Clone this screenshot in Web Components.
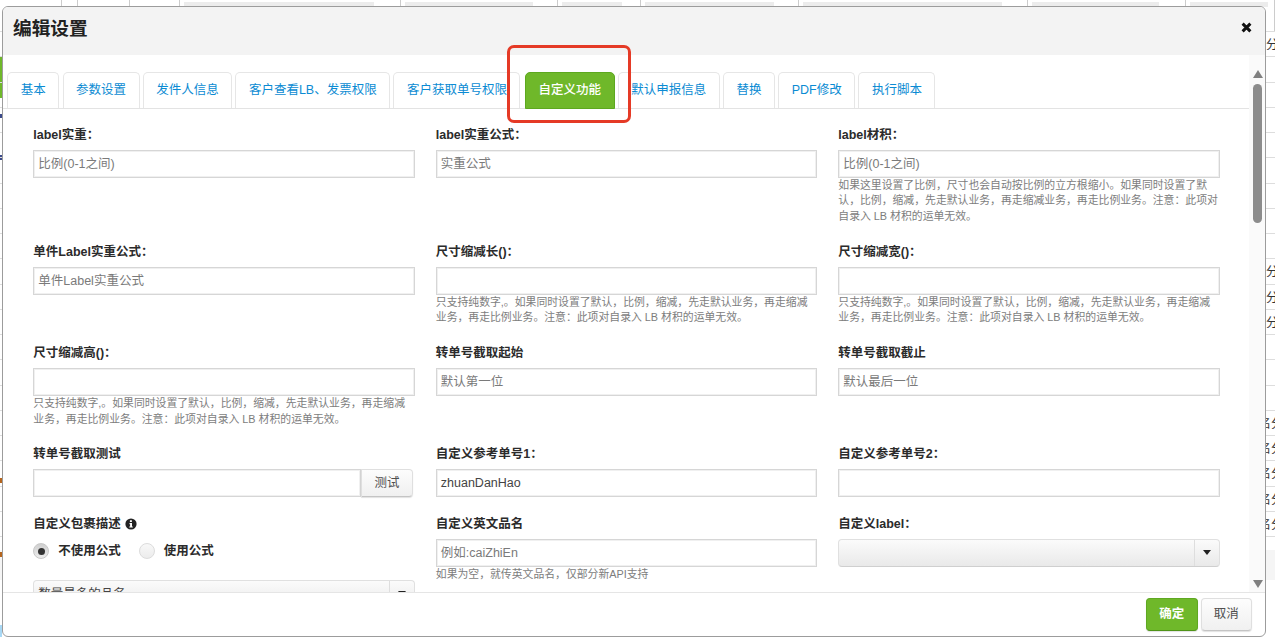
<!DOCTYPE html>
<html lang="zh">
<head>
<meta charset="utf-8">
<title>编辑设置</title>
<style>
  html, body { margin: 0; height: 100%; overflow: hidden; background: #fff; }
  body { font: 12.5px/16px "Liberation Sans", "Noto Sans CJK SC", sans-serif; color: #333; }
</style>
</head>
<body>
<page-backdrop></page-backdrop>

<settings-modal heading="编辑设置">
  <tab-bar slot="tabs">
    <tab-item>基本</tab-item>
    <tab-item>参数设置</tab-item>
    <tab-item>发件人信息</tab-item>
    <tab-item>客户查看LB、发票权限</tab-item>
    <tab-item>客户获取单号权限</tab-item>
    <tab-item active>自定义功能</tab-item>
    <tab-item>默认申报信息</tab-item>
    <tab-item>替换</tab-item>
    <tab-item>PDF修改</tab-item>
    <tab-item>执行脚本</tab-item>
  </tab-bar>

  <form-grid>
    <form-field label="label实重：">
      <text-box placeholder>比例(0-1之间)</text-box>
    </form-field>
    <form-field label="label实重公式：">
      <text-box placeholder>实重公式</text-box>
    </form-field>
    <form-field label="label材积：">
      <text-box placeholder>比例(0-1之间)</text-box>
      <span slot="help">如果这里设置了比例，尺寸也会自动按比例的立方根缩小。如果同时设置了默认，比例，缩减，先走默认业务，再走缩减业务，再走比例业务。注意：此项对自录入 LB 材积的运单无效。</span>
    </form-field>

    <form-field label="单件Label实重公式：">
      <text-box placeholder>单件Label实重公式</text-box>
    </form-field>
    <form-field label="尺寸缩减长()：">
      <text-box></text-box>
      <span slot="help">只支持纯数字,。如果同时设置了默认，比例，缩减，先走默认业务，再走缩减业务，再走比例业务。注意：此项对自录入 LB 材积的运单无效。</span>
    </form-field>
    <form-field label="尺寸缩减宽()：">
      <text-box></text-box>
      <span slot="help">只支持纯数字,。如果同时设置了默认，比例，缩减，先走默认业务，再走缩减业务，再走比例业务。注意：此项对自录入 LB 材积的运单无效。</span>
    </form-field>

    <form-field label="尺寸缩减高()：">
      <text-box></text-box>
      <span slot="help">只支持纯数字,。如果同时设置了默认，比例，缩减，先走默认业务，再走缩减业务，再走比例业务。注意：此项对自录入 LB 材积的运单无效。</span>
    </form-field>
    <form-field label="转单号截取起始">
      <text-box placeholder>默认第一位</text-box>
    </form-field>
    <form-field label="转单号截取截止">
      <text-box placeholder>默认最后一位</text-box>
    </form-field>

    <form-field label="转单号截取测试">
      <input-group>
        <text-box></text-box>
        <plain-button slot="append" kind="addon">测试</plain-button>
      </input-group>
    </form-field>
    <form-field label="自定义参考单号1：">
      <text-box>zhuanDanHao</text-box>
    </form-field>
    <form-field label="自定义参考单号2：">
      <text-box></text-box>
    </form-field>

    <form-field label="自定义包裹描述" info>
      <radio-row>
        <radio-option checked>不使用公式</radio-option>
        <radio-option>使用公式</radio-option>
      </radio-row>
      <select-box style="margin-top: 17px">数量最多的品名</select-box>
    </form-field>
    <form-field label="自定义英文品名">
      <text-box placeholder>例如:caiZhiEn</text-box>
      <span slot="help">如果为空，就传英文品名，仅部分新API支持</span>
    </form-field>
    <form-field label="自定义label：">
      <select-box></select-box>
    </form-field>
  </form-grid>

  <plain-button slot="footer" kind="primary">确定</plain-button>
  <plain-button slot="footer">取消</plain-button>
</settings-modal>

<script>
  // table of the page behind the dialog, only its edges stay visible
  const topCells = [
    [62, 0], [16, 0], [52, 0], [50, 0],
    [221, 190], [157, 128], [83, 60], [158, 129], [229, 199], [158, 127], [89, 78]
  ]
  const rowTexts = { 0: '分', 9: '分', 10: '分', 11: '分', 15: '名分', 16: '名分', 17: '名分', 18: '名分', 19: '名分' }

  customElements.define('page-backdrop',
    class extends HTMLElement {
      constructor () {
        super()
        const cells = topCells.map(([w, bar]) =>
          `<div class="cell" style="width:${w}px">${bar ? `<i style="width:${bar}px"></i>` : ''}</div>`).join('')
        let rows = ''
        for (let i = 0; i < 20; i++) {
          const text = rowTexts[i] || ''
          rows += `<div class="row${text.length > 1 ? ' wide' : ''}">${text}</div>`
        }
        this.attachShadow({ mode: 'open' }).innerHTML = `
          <style>
            :host {
              display: block; height: 637px; overflow: hidden; white-space: nowrap;
              background:
                linear-gradient(#6fb82a, #6fb82a) 0 57px / 2px 41px no-repeat,
                linear-gradient(#3b4a8a, #3b4a8a) 0 114px / 2px 4px no-repeat,
                linear-gradient(#3b4a8a, #3b4a8a) 0 155px / 2px 5px no-repeat,
                linear-gradient(#b5651d, #b5651d) 0 478px / 2px 5px no-repeat,
                linear-gradient(#b5651d, #b5651d) 0 552px / 2px 5px no-repeat,
                linear-gradient(#a8d8f5, #a8d8f5) 0 625px / 2px 12px no-repeat,
                linear-gradient(#f5f5f5, #f5f5f5) 0 550px / 100% 30px no-repeat;
            }
            .top { display: flex; height: 31px; border-bottom: 1px solid #ddd; }
            .cell { box-sizing: border-box; height: 100%; border-right: 1px solid #ccc; padding: 2px 0 0 4px; }
            .cell i { display: block; height: 5px; background: #ececec; }
            .row {
              box-sizing: border-box; height: 25.25px; line-height: 26px;
              border-bottom: 1px solid #ddd; padding-left: 1266px; color: #333;
            }
            .row.wide { padding-left: 1258.5px; }
          </style>
          <div class="top">${cells}</div>
          ${rows}`
      }
    })

  const modalTemplate = document.createElement('template')
  modalTemplate.innerHTML = `
    <style>
      :host {
        position: absolute; left: 2px; top: 6px; width: 1264px; height: 631px;
        box-sizing: border-box; display: flex; flex-direction: column;
        background: #fff; border: 1px solid #9c9c9c; border-radius: 6px; overflow: hidden;
      }
      header {
        flex: none; height: 48px; box-sizing: border-box; background: #f3f3f3;
        display: flex; justify-content: space-between; padding: 0 13px 0 10px;
      }
      h3 { margin: 0; font-size: 18.7px; line-height: 44px; font-weight: 700; color: #222; }
      svg { margin-top: 15px; }
      .middle { flex: 1; min-height: 0; display: flex; }
      .pane { flex: 1; min-width: 0; overflow: hidden; }
      footer {
        flex: none; height: 44px; box-sizing: border-box; border-top: 1px solid #e5e5e5;
        display: flex; justify-content: flex-end; gap: 2.5px; padding: 5px 13px 0 0;
      }
      .mark {
        position: absolute; left: 504px; top: 38px; width: 124px; height: 78px;
        box-sizing: border-box; border: 3px solid #e53a26; border-radius: 7px;
      }
    </style>
    <header>
      <h3></h3>
      <svg width="11" height="11" viewBox="0 0 11 11"><path d="M1.6 1.6 9.4 9.4M9.4 1.6 1.6 9.4" stroke="#111" stroke-width="3"/></svg>
    </header>
    <div class="middle">
      <div class="pane">
        <slot name="tabs"></slot>
        <slot></slot>
      </div>
      <scroll-track></scroll-track>
    </div>
    <footer><slot name="footer"></slot></footer>
    <div class="mark"></div>
  `

  customElements.define('settings-modal',
    class extends HTMLElement {
      constructor () {
        super()
        this.attachShadow({ mode: 'open' })
          .appendChild(modalTemplate.content.cloneNode(true))
        this.shadowRoot.querySelector('h3').textContent = this.getAttribute('heading')
      }
    })

  const scrollTemplate = document.createElement('template')
  scrollTemplate.innerHTML = `
    <style>
      :host {
        flex: none; width: 16px; box-sizing: border-box; background: #fafafa; padding: 15px 0 0 1px;
        display: flex; flex-direction: column; align-items: center;
      }
      .up { width: 0; border: 5px solid transparent; border-top: 0; border-bottom: 8px solid #808080; }
      .thumb { width: 9px; height: 139px; margin-top: 6px; border-radius: 5px; background: #8c8c8c; }
      .down { width: 0; margin-top: auto; margin-bottom: 4px; border: 5px solid transparent; border-bottom: 0; border-top: 8px solid #808080; }
    </style>
    <div class="up"></div>
    <div class="thumb"></div>
    <div class="down"></div>
  `

  customElements.define('scroll-track',
    class extends HTMLElement {
      constructor () {
        super()
        this.attachShadow({ mode: 'open' })
          .appendChild(scrollTemplate.content.cloneNode(true))
      }
    })

  const tabBarTemplate = document.createElement('template')
  tabBarTemplate.innerHTML = `
    <style>
      :host {
        display: flex; gap: 3.2px; margin-top: 17px; padding-left: 4.3px;
        height: 36px; border-bottom: 1px solid #e3e3e3;
      }
    </style>
    <slot></slot>
  `

  customElements.define('tab-bar',
    class extends HTMLElement {
      constructor () {
        super()
        this.attachShadow({ mode: 'open' })
          .appendChild(tabBarTemplate.content.cloneNode(true))
      }
    })

  const tabTemplate = document.createElement('template')
  tabTemplate.innerHTML = `
    <style>
      :host {
        display: block; box-sizing: border-box; height: 36px; padding: 0 12.5px;
        line-height: 35px; color: #0b8bd3; white-space: nowrap;
        border: 1px solid #e6e6e6; border-bottom: 0; border-radius: 5px 5px 0 0;
      }
      :host([active]) {
        height: 37px; margin-left: 1.5px; color: #fff; font-weight: 500;
        background: #6fb82a; border: 1px solid #5da81f;
      }
    </style>
    <slot></slot>
  `

  customElements.define('tab-item',
    class extends HTMLElement {
      constructor () {
        super()
        this.attachShadow({ mode: 'open' })
          .appendChild(tabTemplate.content.cloneNode(true))
      }
    })

  const gridTemplate = document.createElement('template')
  gridTemplate.innerHTML = `
    <style>
      :host {
        display: grid; grid-template-columns: repeat(3, 381.5px); column-gap: 21px;
        align-items: start; padding: 18.5px 0 0 30.3px;
      }
    </style>
    <slot></slot>
  `

  customElements.define('form-grid',
    class extends HTMLElement {
      constructor () {
        super()
        this.attachShadow({ mode: 'open' })
          .appendChild(gridTemplate.content.cloneNode(true))
      }
    })

  const fieldTemplate = document.createElement('template')
  fieldTemplate.innerHTML = `
    <style>
      :host { display: block; margin-bottom: 20px; }
      .label { height: 22px; line-height: 14px; font-weight: 700; color: #2b2b2b; display: flex; align-items: flex-start; gap: 4px; }
      .help { font-size: 10.85px; line-height: 15.7px; color: #7d7d7d; }
      svg { display: none; margin-top: 1px; }
      :host([info]) svg { display: block; }
    </style>
    <div class="label">
      <span id="text"></span>
      <svg width="12" height="12" viewBox="0 0 12 12">
        <circle cx="6" cy="6" r="5.6" fill="#222"/>
        <path d="M4.9 2.3h2v1.7h-2zM4.5 5h2.5v3.4h.8v1.2H4.3V8.4h.8V6.2h-.6z" fill="#fff"/>
      </svg>
    </div>
    <slot></slot>
    <div class="help"><slot name="help"></slot></div>
  `

  customElements.define('form-field',
    class extends HTMLElement {
      constructor () {
        super()
        this.attachShadow({ mode: 'open' })
          .appendChild(fieldTemplate.content.cloneNode(true))
        this.shadowRoot.querySelector('#text').textContent = this.getAttribute('label')
      }
    })

  const textBoxTemplate = document.createElement('template')
  textBoxTemplate.innerHTML = `
    <style>
      :host {
        display: block; box-sizing: border-box; height: 28px; padding: 0 4px;
        line-height: 26px; color: #444; background: #fff; white-space: nowrap;
        border: 1px solid #d6d6d6; box-shadow: inset 0 0 0 1px #f0f0f0;
      }
      :host([placeholder]) { color: #7a7a7a; }
    </style>
    <slot></slot>
  `

  customElements.define('text-box',
    class extends HTMLElement {
      constructor () {
        super()
        this.attachShadow({ mode: 'open' })
          .appendChild(textBoxTemplate.content.cloneNode(true))
      }
    })

  const groupTemplate = document.createElement('template')
  groupTemplate.innerHTML = `
    <style>
      :host { display: flex; width: 379.5px; }
      ::slotted(text-box) { flex: 1; min-width: 0; }
    </style>
    <slot></slot>
    <slot name="append"></slot>
  `

  customElements.define('input-group',
    class extends HTMLElement {
      constructor () {
        super()
        this.attachShadow({ mode: 'open' })
          .appendChild(groupTemplate.content.cloneNode(true))
      }
    })

  const buttonTemplate = document.createElement('template')
  buttonTemplate.innerHTML = `
    <style>
      :host {
        display: flex; align-items: center; justify-content: center;
        box-sizing: border-box; width: 51.5px; height: 32.5px; border-radius: 4px;
        color: #4f4f4f; background: linear-gradient(#fdfdfd, #f0f0f0);
        border: 1px solid #dfdfdf; border-bottom-color: #c4c4c4;
        box-shadow: 0 1px 1px rgba(0, 0, 0, .12);
      }
      :host([kind="primary"]) {
        width: 52.5px; color: #fff; font-weight: 700;
        background: #6fb82a; border-color: #5fa822; border-bottom-color: #4f9418;
      }
      :host([kind="addon"]) { height: 28px; border-radius: 0 4px 4px 0; }
    </style>
    <slot></slot>
  `

  customElements.define('plain-button',
    class extends HTMLElement {
      constructor () {
        super()
        this.attachShadow({ mode: 'open' })
          .appendChild(buttonTemplate.content.cloneNode(true))
      }
    })

  const radioRowTemplate = document.createElement('template')
  radioRowTemplate.innerHTML = `
    <style>
      :host { display: flex; gap: 18px; height: 24px; align-items: center; }
    </style>
    <slot></slot>
  `

  customElements.define('radio-row',
    class extends HTMLElement {
      constructor () {
        super()
        this.attachShadow({ mode: 'open' })
          .appendChild(radioRowTemplate.content.cloneNode(true))
      }
    })

  const radioTemplate = document.createElement('template')
  radioTemplate.innerHTML = `
    <style>
      :host { display: flex; align-items: center; gap: 9px; font-weight: 700; color: #2b2b2b; }
      i {
        width: 16px; height: 16px; box-sizing: border-box; border-radius: 50%;
        border: 1px solid #dcdcdc; background: linear-gradient(#f8f8f8, #ececec);
        display: flex; align-items: center; justify-content: center;
      }
      :host([checked]) i { background: linear-gradient(#cfcfcf, #ededed); border-color: #c8c8c8; }
      :host([checked]) i::after { content: ""; width: 7px; height: 7px; border-radius: 50%; background: #333; }
    </style>
    <i></i><slot></slot>
  `

  customElements.define('radio-option',
    class extends HTMLElement {
      constructor () {
        super()
        this.attachShadow({ mode: 'open' })
          .appendChild(radioTemplate.content.cloneNode(true))
      }
    })

  const selectTemplate = document.createElement('template')
  selectTemplate.innerHTML = `
    <style>
      :host {
        display: flex; box-sizing: border-box; height: 28px; border-radius: 4px;
        border: 1px solid #e0e0e0; border-bottom-color: #cfcfcf; color: #444; line-height: 26px;
        background: linear-gradient(#fbfbfb, #e9e9e9);
      }
      .value { flex: 1; padding-left: 4px; }
      .arrow {
        width: 24px; border-left: 1px solid #dedede;
        display: flex; align-items: center; justify-content: center;
      }
      .arrow i { width: 0; margin-top: -2px; border: 4px solid transparent; border-bottom: 0; border-top: 5px solid #222; }
    </style>
    <div class="value"><slot></slot></div>
    <div class="arrow"><i></i></div>
  `

  customElements.define('select-box',
    class extends HTMLElement {
      constructor () {
        super()
        this.attachShadow({ mode: 'open' })
          .appendChild(selectTemplate.content.cloneNode(true))
      }
    })
</script>
</body>
</html>
